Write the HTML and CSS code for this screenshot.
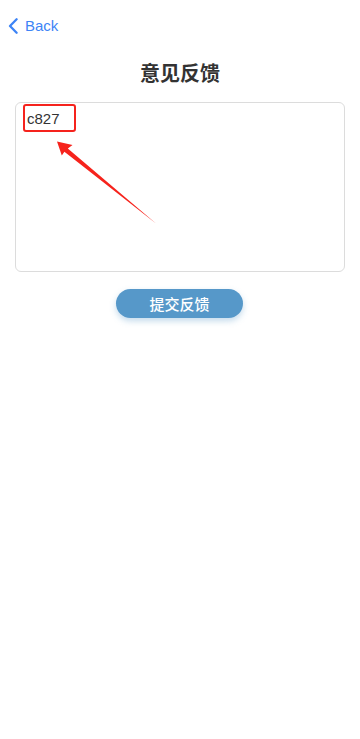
FILE: index.html
```html
<!DOCTYPE html>
<html lang="zh">
<head>
<meta charset="utf-8">
<meta name="viewport" content="width=device-width, initial-scale=1">
<title>意见反馈</title>
<link rel="stylesheet" href="styles.css">
</head>
<body>
<div class="page">
  <header class="nav">
    <a class="back" href="#">
      <svg class="chev" width="12" height="16" viewBox="0 0 12 16" aria-hidden="true">
        <path d="M9.6 1.3 L3 8 L9.6 14.7" fill="none" stroke="#3d84f6" stroke-width="2.3" stroke-linecap="round" stroke-linejoin="round"/>
      </svg>
      <span class="back-text">Back</span>
    </a>
  </header>
  <h1 class="title">意见反馈</h1>
  <div class="field">
    <div class="field-text">c827</div>
    <div class="mark"></div>
  </div>
  <div class="actions">
    <button class="submit" type="button">提交反馈</button>
  </div>
  <svg class="arrow" width="360" height="260" viewBox="0 0 360 260" aria-hidden="true">
    <polygon points="57,141.5 72.5,145 67.8,148.6 156,223.5 64.4,151.8 61.8,155.5" fill="#f6231c"/>
  </svg>
</div>
</body>
</html>
```
FILE: styles.css
```css
* { box-sizing: border-box; }
html, body { margin: 0; padding: 0; background: #ffffff; }
body {
  font-family: "Liberation Sans", "Noto Sans CJK SC", sans-serif;
  color: #333333;
}
.page {
  position: relative;
  width: 360px;
  min-height: 739px;
}
.nav {
  height: 50px;
  display: flex;
  align-items: center;
  padding-left: 7px;
}
.back {
  display: flex;
  align-items: center;
  gap: 6px;
  text-decoration: none;
  color: #3d84f6;
  margin-top: 1px;
}
.chev { display: block; }
.back-text {
  font-size: 15px;
  line-height: 20px;
}
.title {
  margin: 0;
  height: 46px;
  line-height: 46px;
  text-align: center;
  font-size: 20px;
  font-weight: 700;
  color: #333333;
  font-family: "Noto Sans CJK SC", sans-serif;
}
.field {
  position: relative;
  margin: 6px 15px 0;
  height: 170px;
  border: 1px solid #dcdcdc;
  border-radius: 6px;
  padding: 6px 11px;
}
.field-text {
  font-size: 15px;
  line-height: 20px;
  color: #333333;
}
.mark {
  position: absolute;
  left: 7px;
  top: 1px;
  width: 53px;
  height: 28px;
  border: 2.6px solid #f5231d;
  border-radius: 3px;
}
.actions {
  display: flex;
  justify-content: center;
  margin-top: 17px;
}
.submit {
  width: 127px;
  height: 29px;
  border: none;
  border-radius: 14.5px;
  background: #5698c9;
  color: #ffffff;
  font-family: "Noto Sans CJK SC", sans-serif;
  font-size: 15px;
  font-weight: 500;
  line-height: 29px;
  padding: 0;
  box-shadow: 0 3px 6px rgba(86, 152, 201, 0.35);
  margin-left: -1px;
}
.arrow {
  position: absolute;
  left: 0;
  top: 0;
  pointer-events: none;
}
```
